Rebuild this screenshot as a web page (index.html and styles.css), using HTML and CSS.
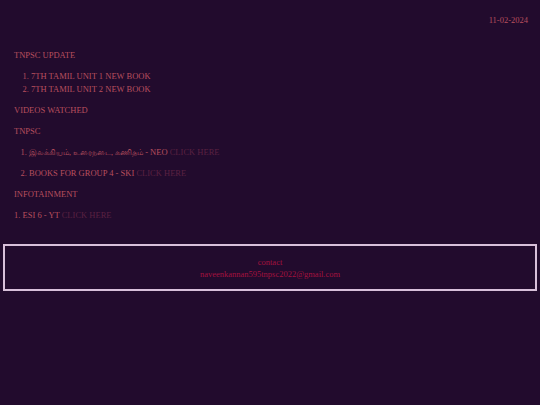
FILE: index.html
```html
<!DOCTYPE html>
<html>
<head>
<meta charset="utf-8">
<link rel="stylesheet" href="styles.css">
</head>
<body>
<div class="page">
  <header class="topbar">
    <span class="date">11-02-2024</span>
  </header>
  <main class="content">
    <p class="heading">TNPSC UPDATE</p>
    <ol class="list list-tight">
      <li>7TH TAMIL UNIT 1 NEW BOOK</li>
      <li>7TH TAMIL UNIT 2 NEW BOOK</li>
    </ol>
    <p class="heading">VIDEOS WATCHED</p>
    <p class="heading">TNPSC</p>
    <ol class="list list-loose">
      <li><span class="tamil">இலக்கியம், உரைநடை, கணிதம்</span> - NEO <a class="link" href="#">CLICK HERE</a></li>
      <li>BOOKS FOR GROUP 4 - SKI <a class="link" href="#">CLICK HERE</a></li>
    </ol>
    <p class="heading">INFOTAINMENT</p>
    <p class="heading">1. ESI 6 - YT <a class="link" href="#">CLICK HERE</a></p>
  </main>
  <footer class="contact-box">
    <p class="contact-title">contact</p>
    <p class="contact-mail">naveenkannan595tnpsc2022@gmail.com</p>
  </footer>
</div>
</body>
</html>
```
FILE: styles.css
```css
html, body {
  margin: 0;
  padding: 0;
  background: #220b2d;
}
body {
  font-family: "Liberation Serif", "Noto Sans", serif;
  font-size: 8.5px;
  line-height: 12.6px;
  color: #b84f5e;
}
.page {
  min-height: 405px;
}
.topbar {
  display: flex;
  justify-content: flex-end;
  padding: 14.2px 12px 0 14px;
}
.content {
  display: flex;
  flex-direction: column;
  gap: 8.5px;
  padding: 22.5px 12px 0 14px;
}
.heading {
  margin: 0;
}
.list {
  margin: 0;
  display: flex;
  flex-direction: column;
}
.list-tight {
  padding-left: 17px;
}
.list-loose {
  padding-left: 15px;
  gap: 7.4px;
}
.tamil {
  font-size: 8px;
}
.link {
  color: #5a2142;
  text-decoration: none;
}
.contact-box {
  margin: 22px 3px 0 3px;
  border: 2px solid #d8c0da;
  padding: 9.5px 0 9.5px;
  text-align: center;
  line-height: 12px;
  color: #a3123f;
}
.contact-box p {
  margin: 0;
}
```
